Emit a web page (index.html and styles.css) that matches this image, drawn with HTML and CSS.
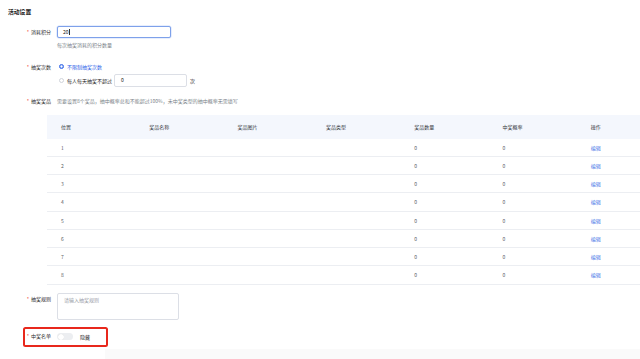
FILE: index.html
```html
<!DOCTYPE html>
<html lang="zh-CN">
<head>
<meta charset="utf-8">
<title>活动设置</title>
<link rel="stylesheet" href="styles.css">
</head>
<body>
<div class="page">
  <h2 class="title">活动设置</h2>

  <div class="item item-points">
    <div class="label"><span class="req">*</span>消耗积分</div>
    <div class="control">
      <div class="input input-focus">20<span class="caret"></span></div>
      <div class="hint">每次抽奖消耗的积分数量</div>
    </div>
  </div>

  <div class="item item-times">
    <div class="label label-tall"><span class="req">*</span>抽奖次数</div>
    <div class="control">
      <div class="radio-row">
        <span class="radio radio-on"></span><span class="radio-text on">不限制抽奖次数</span>
      </div>
      <div class="radio-row">
        <span class="radio"></span><span class="radio-text">每人每天抽奖不超过</span>
        <div class="input input-small">0</div>
        <span class="unit">次</span>
      </div>
    </div>
  </div>

  <div class="item item-prizes">
    <div class="label"><span class="req">*</span>抽奖奖品</div>
    <div class="control">
      <div class="hint hint-inline">需要设置8个奖品，抽中概率总和不能超过100%，未中奖类型的抽中概率无需填写</div>
    </div>
  </div>

  <div class="table">
    <div class="tr th">
      <div class="td">位置</div><div class="td">奖品名称</div><div class="td">奖品图片</div><div class="td">奖品类型</div><div class="td">奖品数量</div><div class="td">中奖概率</div><div class="td">操作</div>
    </div>
    <div class="tr"><div class="td">1</div><div class="td"></div><div class="td"></div><div class="td"></div><div class="td">0</div><div class="td">0</div><div class="td"><a class="link">编辑</a></div></div>
    <div class="tr"><div class="td">2</div><div class="td"></div><div class="td"></div><div class="td"></div><div class="td">0</div><div class="td">0</div><div class="td"><a class="link">编辑</a></div></div>
    <div class="tr"><div class="td">3</div><div class="td"></div><div class="td"></div><div class="td"></div><div class="td">0</div><div class="td">0</div><div class="td"><a class="link">编辑</a></div></div>
    <div class="tr"><div class="td">4</div><div class="td"></div><div class="td"></div><div class="td"></div><div class="td">0</div><div class="td">0</div><div class="td"><a class="link">编辑</a></div></div>
    <div class="tr"><div class="td">5</div><div class="td"></div><div class="td"></div><div class="td"></div><div class="td">0</div><div class="td">0</div><div class="td"><a class="link">编辑</a></div></div>
    <div class="tr"><div class="td">6</div><div class="td"></div><div class="td"></div><div class="td"></div><div class="td">0</div><div class="td">0</div><div class="td"><a class="link">编辑</a></div></div>
    <div class="tr"><div class="td">7</div><div class="td"></div><div class="td"></div><div class="td"></div><div class="td">0</div><div class="td">0</div><div class="td"><a class="link">编辑</a></div></div>
    <div class="tr"><div class="td">8</div><div class="td"></div><div class="td"></div><div class="td"></div><div class="td">0</div><div class="td">0</div><div class="td"><a class="link">编辑</a></div></div>
  </div>

  <div class="item item-rules">
    <div class="label label-top"><span class="req">*</span>抽奖规则</div>
    <div class="control">
      <div class="textarea">请输入抽奖规则</div>
    </div>
  </div>

  <div class="item item-winners">
    <div class="label label-short"><span class="req">*</span>中奖名单</div>
    <div class="control control-row">
      <span class="switch"><span class="knob"></span></span>
      <span class="switch-text">隐藏</span>
    </div>
  </div>

  <div class="footer"></div>
</div>
</body>
</html>
```

FILE: styles.css
```css
html, body {
  margin: 0;
  padding: 0;
  background: #ffffff;
  overflow: hidden;
}
body {
  width: 640px;
  height: 359px;
  font-family: "Noto Sans CJK SC", "Noto Sans", sans-serif;
  font-size: 5px;
  color: #222222;
}
.page {
  padding: 8px 0 0 8px;
}
.title {
  margin: 0;
  font-size: 5.8px;
  line-height: 8px;
  font-weight: 700;
  color: #1a1a1a;
}
.item {
  display: flex;
  align-items: flex-start;
}
.label {
  width: 43px;
  padding-right: 6px;
  text-align: right;
  line-height: 12px;
  color: #2a2a2a;
  flex-shrink: 0;
  white-space: nowrap;
}
.req {
  color: #f04b3c;
  margin-right: 2px;
}
.control {
  display: flex;
  flex-direction: column;
}
.item-points {
  margin-top: 10px;
}
.input {
  box-sizing: border-box;
  height: 12px;
  border: 1px solid #dcdfe6;
  border-radius: 2px;
  padding-left: 5px;
  line-height: 10px;
  color: #222222;
  background: #fff;
  display: flex;
  align-items: center;
}
.input-focus {
  width: 114px;
  border-color: #7ea1ea;
  box-shadow: 0 0 0 0.5px rgba(64, 120, 240, 0.25);
}
.caret {
  display: inline-block;
  width: 0.6px;
  height: 6px;
  background: #333;
  margin-left: 0.3px;
}
.hint {
  margin-top: 3px;
  line-height: 8px;
  color: #7a7f88;
}
.hint-inline {
  margin-top: 0;
}
.item-times {
  margin-top: 11px;
}
.label-tall {
  line-height: 13px;
}
.radio-row {
  display: flex;
  align-items: center;
  height: 13px;
}
.radio-row + .radio-row {
  margin-top: 0.5px;
}
.radio {
  box-sizing: border-box;
  width: 5px;
  height: 5px;
  margin-left: 1.5px;
  border-radius: 50%;
  border: 0.6px solid #d0d3da;
  background: #fff;
  flex-shrink: 0;
}
.radio-on {
  border: 1.5px solid #2f64e8;
  background: #ffffff;
  box-shadow: inset 0 0 0 0.3px #2f64e8;
}
.radio-text {
  margin-left: 3.5px;
  color: #222;
  white-space: nowrap;
}
.radio-text.on {
  color: #2f64e8;
}
.input-small {
  width: 73px;
  height: 13px;
  margin-left: 2px;
  padding-left: 6px;
}
.unit {
  margin-left: 3px;
}
.item-prizes {
  margin-top: 10px;
}
.item-prizes .label {
  line-height: 8px;
}
.table {
  margin-top: 10px;
  margin-left: 39px;
  width: 618px;
}
.tr {
  display: grid;
  grid-template-columns: repeat(7, 88.3px);
  height: 18.25px;
  box-sizing: border-box;
  border-bottom: 0.6px solid #eceef2;
  align-items: center;
  color: #5a5e66;
}
.tr.th {
  height: 24px;
  background: #f4f7fd;
  border-bottom: none;
  color: #33363b;
}
.td {
  padding-left: 14px;
  white-space: nowrap;
}
.link {
  color: #3d6fe6;
  text-decoration: none;
}
.item-rules {
  margin-top: 8px;
}
.label-top {
  line-height: 8px;
  padding-top: 2px;
}
.textarea {
  box-sizing: border-box;
  width: 122px;
  height: 27px;
  border: 0.7px solid #dcdfe6;
  border-radius: 2px;
  padding: 2px 6px;
  line-height: 8px;
  color: #9a9ea6;
}
.item-winners {
  display: inline-flex;
  margin-top: 7px;
  margin-left: 15px;
  height: 20px;
  box-sizing: border-box;
  border: 2px solid #e8281c;
  border-radius: 2.5px;
  padding-right: 16px;
  align-items: center;
}
.label-short {
  width: 26px;
  line-height: 8px;
  margin-top: -2px;
}
.control-row {
  flex-direction: row;
  align-items: center;
}
.switch {
  position: relative;
  display: inline-block;
  width: 16px;
  height: 7px;
  border-radius: 4px;
  background: #eceef1;
}
.knob {
  position: absolute;
  left: 0.5px;
  top: 0.5px;
  width: 6px;
  height: 6px;
  border-radius: 50%;
  background: #ffffff;
  box-shadow: 0 0 0.5px rgba(0,0,0,0.2);
}
.switch-text {
  margin-left: 7px;
  color: #222;
}
.footer {
  margin-top: 2px;
  margin-left: 97px;
  height: 20px;
  background: #fafafa;
}
```
